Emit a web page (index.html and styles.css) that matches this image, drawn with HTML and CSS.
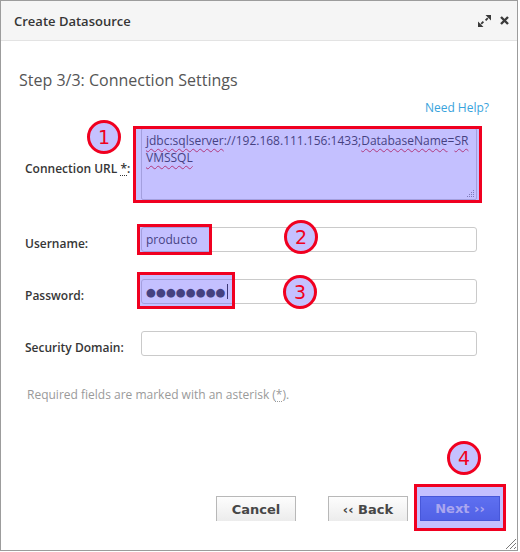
FILE: index.html
```html
<!DOCTYPE html>
<html>
<head>
<meta charset="utf-8">
<title>Create Datasource</title>
<link rel="stylesheet" href="styles.css">
</head>
<body>
<div class="dialog">
  <div class="header">
    <span class="title">Create Datasource</span>
    <span class="tools">
      <svg class="ico-expand" width="13" height="12" viewBox="0 0 13 12"><path d="M13 0 L13 5.5 L7.5 0 Z M0 12 L0 6.5 L5.5 12 Z" fill="#3a3a3a"/><path d="M9.8 3.2 L7.6 5.4 M3.2 8.8 L5.4 6.6" stroke="#3a3a3a" stroke-width="1.8"/></svg>
      <svg class="ico-close" width="9" height="9" viewBox="0 0 9 9"><path d="M1 1 L8 8 M8 1 L1 8" stroke="#3a3a3a" stroke-width="2.4"/></svg>
    </span>
  </div>
  <div class="body">
    <h2 class="step">Step 3/3: Connection Settings</h2>
    <div class="help"><a class="help-link">Need Help?</a></div>
    <div class="form">
      <label class="lbl">Connection URL <abbr title="Required field">*</abbr>:</label>
      <div class="field area"><span class="sp">jdbc:sqlserver</span>://192.168.111.156:1433;<span class="sp">DatabaseName</span>=<span class="sp">SR</span><br><span class="sp">VMSSQL</span><svg class="ta-grip" width="7" height="7" viewBox="0 0 7 7" fill="#8f8f8f"><rect x="6" y="0" width="1" height="1"/><rect x="4" y="2" width="1" height="1"/><rect x="6" y="2" width="1" height="1"/><rect x="2" y="4" width="1" height="1"/><rect x="4" y="4" width="1" height="1"/><rect x="6" y="4" width="1" height="1"/><rect x="0" y="6" width="1" height="1"/><rect x="2" y="6" width="1" height="1"/><rect x="4" y="6" width="1" height="1"/><rect x="6" y="6" width="1" height="1"/></svg></div>
      <label class="lbl">Username:</label>
      <input class="field input" type="text" value="producto">
      <label class="lbl">Password:</label>
      <div class="field input pw"><span class="dots">●●●●●●●●</span><span class="caret"></span></div>
      <label class="lbl">Security Domain:</label>
      <input class="field input" type="text" value="">
    </div>
    <p class="note">Required fields are marked with an asterisk (<abbr title="Required field">*</abbr>).</p>
  </div>
  <div class="footer">
    <button class="btn cancel">Cancel</button>
    <button class="btn back">‹‹ Back</button>
    <button class="btn primary">Next ››</button>
  </div>
  <svg class="corner-grip" width="10" height="10" viewBox="0 0 10 10"><path d="M10 0 L0 10 M10 4 L4 10 M10 8 L8 10" stroke="#7a7a7a" stroke-width="1"/></svg>

  <div class="mark rect r1"></div>
  <div class="mark rect r2"></div>
  <div class="mark rect r3"></div>
  <div class="mark rect r4"></div>
  <div class="mark num n1">1</div>
  <div class="mark num n2">2</div>
  <div class="mark num n3">3</div>
  <div class="mark num n4">4</div>
</div>
</body>
</html>
```
FILE: styles.css
```css
* { box-sizing: border-box; }
html, body { margin: 0; background: #fff; }
body { font-family: "Open Sans", "DejaVu Sans", sans-serif; color: #333; }

.dialog {
  position: relative;
  width: 518px;
  height: 551px;
  border: 1px solid #9c9c9c;
  display: flex;
  flex-direction: column;
  background: #fff;
}

.header {
  height: 40px;
  flex: none;
  background: #f5f5f5;
  border-bottom: 1px solid #e3e3e3;
  display: flex;
  align-items: center;
  justify-content: space-between;
  padding: 0 8px 0 13px;
}
.title { font-size: 13px; font-weight: 600; color: #363636; }
.tools { display: flex; align-items: center; gap: 9px; }
.ico-expand, .ico-close { display: block; }

.body { padding: 0 28px 0 18px; }
.step {
  margin: 27px 0 0;
  font-size: 16px;
  font-weight: 400;
  line-height: 24px;
  color: #555;
}
.help { margin-top: 8px; text-align: right; font-size: 12px; line-height: 16px; }
.help-link { color: #39a3dc; text-decoration: none; }

.form {
  margin: 12px 0 0 6px;
  display: grid;
  grid-template-columns: 116px 336px;
  row-gap: 27px;
}
.lbl {
  align-self: center;
  padding-top: 8px;
  font-size: 12px;
  font-weight: 600;
  color: #363636;
}
abbr { text-decoration: underline dotted; text-underline-offset: 2px; }

.field {
  border: 1px solid #cacaca;
  border-radius: 3px;
  background: #fff;
  font-family: "Open Sans", "DejaVu Sans", sans-serif;
  font-size: 12px;
  color: #333;
}
.area {
  position: relative;
  height: 72px;
  padding: 3px 4px;
  line-height: 17px;
  white-space: nowrap;
  border-radius: 2px;
}
.sp { text-decoration: underline wavy #e2262e; text-decoration-thickness: 1px; text-underline-offset: 3px; }
.ta-grip { position: absolute; right: 2px; bottom: 2px; display: block; }

.input {
  height: 25px;
  padding: 0 4px;
  margin: 0;
  outline: none;
  display: block;
  width: 336px;
}
.pw { display: flex; align-items: center; }
.dots { font-family: "DejaVu Sans", sans-serif; font-size: 11.4px; color: #333; letter-spacing: 0; }
.caret { width: 1px; height: 15px; background: #222; margin-left: 1px; }

.note { margin: 31px 0 0 8px; font-size: 12px; line-height: 16px; color: #9a9a9a; }

.footer {
  margin-top: auto;
  display: flex;
  justify-content: flex-end;
  padding: 0 17px 29px 0;
}
.btn {
  width: 80px;
  height: 25px;
  padding: 0;
  font-family: "DejaVu Sans", sans-serif;
  font-weight: 700;
  font-size: 13px;
  color: #474747;
  background: linear-gradient(#fdfdfd, #ececec);
  border: 1px solid #b8b8b8;
  border-bottom: 0;
  border-radius: 0;
}
.cancel { margin-right: 32px; }
.back { margin-right: 12px; }
.primary {
  color: #d6d6e6;
  background: linear-gradient(#5b7ee8, #4666d6);
  border: 1px solid #3656c2;
}

.corner-grip { position: absolute; right: 1px; bottom: 1px; display: block; }

.mark { position: absolute; }
.rect { border: 3px solid #f00020; background: rgba(100, 90, 255, 0.38); }
.r1 { left: 132px; top: 125px; width: 349px; height: 77px; }
.r2 { left: 136px; top: 223px; width: 75px; height: 31px; }
.r3 { left: 136px; top: 271px; width: 98px; height: 37px; }
.r4 { left: 413px; top: 483px; width: 92px; height: 47px; }

.num {
  width: 34px;
  height: 34px;
  border: 3px solid #f00020;
  border-radius: 50%;
  background: #c5c1ff;
  color: #f00020;
  font-family: "DejaVu Sans", sans-serif;
  font-size: 19px;
  line-height: 28px;
  text-align: center;
}
.n1 { left: 86px; top: 119px; }
.n2 { left: 283px; top: 219px; }
.n3 { left: 282px; top: 274px; }
.n4 { left: 446px; top: 440px; }
```
